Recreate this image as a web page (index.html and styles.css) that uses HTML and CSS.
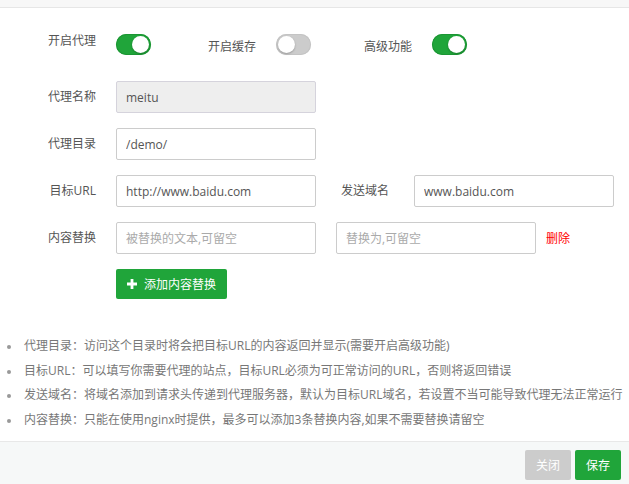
FILE: index.html
```html
<!DOCTYPE html>
<html lang="zh-CN">
<head>
  <meta charset="UTF-8">
  <title>反向代理</title>
  <link rel="stylesheet" href="styles.css">
</head>
<body>

  <!-- 顶部标题栏底边 -->
  <div class="top-bar"></div>

  <!-- 表单 -->
  <div class="form">
    <div class="row switches">
      <div class="switch-item">
        <span class="label label-up">开启代理</span>
        <span class="switch on"></span>
      </div>
      <div class="switch-item">
        <span class="label">开启缓存</span>
        <span class="switch"></span>
      </div>
      <div class="switch-item">
        <span class="label">高级功能</span>
        <span class="switch on"></span>
      </div>
    </div>

    <div class="row">
      <span class="label">代理名称</span>
      <input class="input" type="text" value="meitu" disabled>
    </div>

    <div class="row">
      <span class="label">代理目录</span>
      <input class="input" type="text" value="/demo/">
    </div>

    <div class="row">
      <span class="label">目标URL</span>
      <input class="input" type="text" value="http://www.baidu.com">
      <span class="label label-inline">发送域名</span>
      <input class="input" type="text" value="www.baidu.com">
    </div>

    <div class="row">
      <span class="label">内容替换</span>
      <input class="input" type="text" placeholder="被替换的文本,可留空">
      <input class="input input-second" type="text" placeholder="替换为,可留空">
      <a class="del" href="#">删除</a>
    </div>

    <div class="row">
      <button class="btn-add">
        <svg width="10" height="10" viewBox="0 0 10 10"><path d="M3.6 0h2.8v3.6H10v2.8H6.4V10H3.6V6.4H0V3.6h3.6z" fill="#fff"/></svg>
        添加内容替换
      </button>
    </div>
  </div>

  <!-- 说明 -->
  <ul class="tips">
    <li>代理目录：访问这个目录时将会把目标URL的内容返回并显示(需要开启高级功能)</li>
    <li>目标URL：可以填写你需要代理的站点，目标URL必须为可正常访问的URL，否则将返回错误</li>
    <li>发送域名：将域名添加到请求头传递到代理服务器，默认为目标URL域名，若设置不当可能导致代理无法正常运行</li>
    <li>内容替换：只能在使用nginx时提供，最多可以添加3条替换内容,如果不需要替换请留空</li>
  </ul>

  <!-- 底部按钮 -->
  <div class="footer">
    <button class="btn btn-close">关闭</button>
    <button class="btn btn-save">保存</button>
  </div>

</body>
</html>
```

FILE: styles.css
```css
/* === GERAL === */
* { margin: 0; padding: 0; box-sizing: border-box; }
body {
  background: #fff; color: #555; font-size: 12px;
  font-family: "Open Sans", "Noto Sans CJK SC", sans-serif;
  width: 629px; height: 484px; overflow: hidden;
}
button { cursor: pointer; border: none; font-family: inherit; }

.top-bar { height: 8px; background: #f7f7f7; border-bottom: 1px solid #e6e6e6; }

/* === FORM === */
.form { padding-top: 26px; }
.row { display: flex; align-items: center; margin-bottom: 15px; padding-left: 116px; }
.row .label:first-child { margin-left: -116px; width: 96px; margin-right: 20px; }
.label { text-align: right; line-height: 20px; white-space: nowrap; color: #555; }

.switches { padding-left: 0; margin-bottom: 26px; }
.switches .label:first-child { margin-left: 0; width: auto; }
.switch-item { display: flex; align-items: center; }
.switch-item + .switch-item { margin-left: 57px; }
.switch-item:last-child { margin-left: 53px; }
.switch-item .label { margin: 2px 21px -2px 0; }
.switch-item:first-child .label { width: 96px; }
.switch-item .label-up { margin-top: -8px; margin-bottom: 0; }

.switch {
  position: relative; width: 35px; height: 21px; border-radius: 11px;
  background: #ccc; box-shadow: inset 0 0 0 1px #c4c4c4;
}
.switch::after {
  content: ''; position: absolute; top: 2px; left: 2px; width: 17px; height: 17px;
  border-radius: 50%; background: #fff; box-shadow: 0 1px 2px rgba(0,0,0,0.25);
}
.switch.on { background: #20a53a; box-shadow: inset 0 0 0 1px #1c9634; }
.switch.on::after { left: 16px; }

.input {
  width: 200px; height: 32px; padding: 0 9px; border: 1px solid #ccc; border-radius: 2px;
  font-family: inherit; font-size: 12px; color: #555; background: #fff; outline: none;
}
.input:disabled { background: #eee; border-color: #d5d3dc; color: #555; }
.input::placeholder { color: #aaa; font-size: 12px; }
.label-inline { margin: 0 25px 0 25px; width: 48px; }
.input-second { margin-left: 20px; }
.del { margin-left: 10px; color: #f00; text-decoration: none; }

.btn-add {
  display: flex; align-items: center; gap: 7px; height: 30px; padding: 0 11px;
  background: #20a53a; color: #fff; font-size: 12px; border-radius: 2px;
}

/* === TIPS === */
.tips { list-style: none; margin-top: 35px; color: #777; }
.tips li { position: relative; padding-left: 24px; line-height: 24.5px; white-space: nowrap; }
.tips li::before {
  content: ''; position: absolute; left: 7px; top: 11px;
  width: 4px; height: 4px; border-radius: 50%; background: #999;
}

/* === FOOTER === */
.footer {
  margin-top: 9px; border-top: 1px solid #e8e8e8; background: #f6f8f8;
  display: flex; justify-content: flex-end; gap: 4px; padding: 8px 8px 4px;
}
.btn { width: 46px; height: 30px; border-radius: 2px; color: #fff; font-size: 12px; }
.btn-close { background: #ccc; }
.btn-save { background: #20a53a; }
```
